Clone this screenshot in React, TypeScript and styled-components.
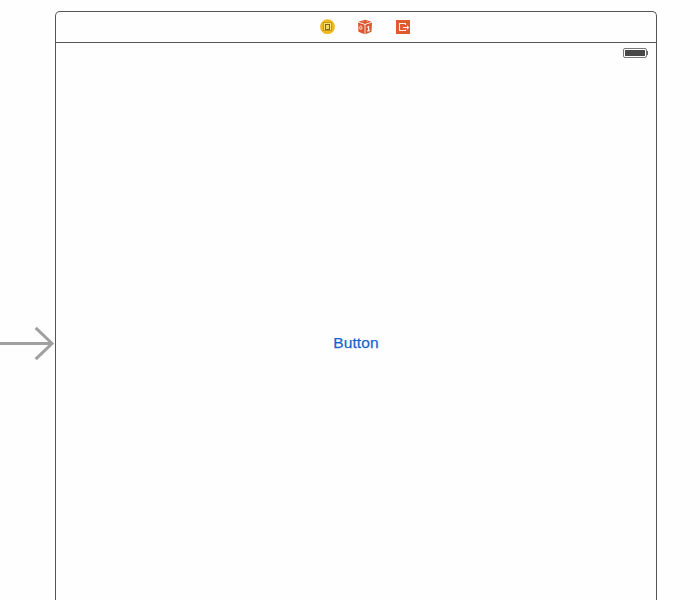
import React from "react";
import styled, { createGlobalStyle } from "styled-components";

const GlobalStyle = createGlobalStyle`
  body { margin: 0; background: #fefefe; overflow: hidden; }
`;

const Canvas = styled.main`
  display: flex;
  width: 700px;
  height: 600px;
  overflow: hidden;
  font-family: "Liberation Sans", Arial, sans-serif;
`;

const EntryGutter = styled.div`
  flex: 0 0 55px;
  padding-top: 326px;
  box-sizing: border-box;
  svg { display: block; }
`;

const Scene = styled.section`
  display: flex;
  flex-direction: column;
  box-sizing: border-box;
  flex: 0 0 602px;
  margin-top: 11px;
  border: 1px solid #565656;
  border-bottom: 0;
  border-radius: 5px 5px 0 0;
`;

const Dock = styled.header`
  display: flex;
  justify-content: center;
  gap: 22px;
  box-sizing: border-box;
  flex: 0 0 31px;
  padding: 7px 0 0 18px;
  border-bottom: 1px solid #565656;
  svg { display: block; }
`;

const StatusBar = styled.div`
  display: flex;
  justify-content: flex-end;
  padding: 4px 7px 0 0;
  flex: 0 0 16px;
`;

const View = styled.div`
  display: flex;
  justify-content: center;
  padding-top: 268px;
`;

const TextButton = styled.button`
  border: 0;
  padding: 0;
  background: none;
  color: #1764cb;
  font: 15.5px/24px "Liberation Sans", Arial, sans-serif;
  letter-spacing: 0.1px;
  -webkit-text-stroke: 0.25px #1764cb;
`;

const ControllerIcon = () => (
  <svg width="16" height="16" viewBox="-1 0 16 16" fill="none">
    <circle cx="7.5" cy="7.7" r="7.4" fill="#efb91c" />
    <rect x="3.5" y="3.5" width="8" height="8" fill="#fbe070" stroke="#c9981c" />
    <rect x="5.5" y="5.5" width="4" height="5" fill="#f8d860" stroke="#80651c" />
  </svg>
);

const ResponderIcon = () => (
  <svg width="16" height="16" viewBox="0 0 16 16" fill="none">
    <path d="M8 .8 14.6 2.7 8 4.9 1.4 2.7ZM1 3.5l6.6 2.2v9.5L1.5 12.7ZM15 3.5 8.4 5.7v9.5l6.1-2.5Z" fill="#dc562f" />
    <path d="M5 2.7h1.6m2.8 0H11" stroke="#f0a78c" strokeWidth=".8" />
    <ellipse cx="3.8" cy="8.7" rx="1.1" ry="1.8" stroke="#ffe7dd" />
    <path d="m10.3 8.4 1.3-.8v4.2m-1.4.4 2.8-.8" stroke="#fff5ef" strokeWidth="1.2" />
  </svg>
);

const ExitIcon = () => (
  <svg width="16" height="16" viewBox="0 0 16 16" fill="none">
    <path d="M1 1h14v14H1Z" fill="#e05a30" />
    <path d="M10.5 6V4.5h-6v7h6V10.5M8 8.5h5.5" stroke="#fff1e9" strokeWidth="1.1" />
    <path d="m12 6.3 2.2 2.2-2.2 2.2Z" fill="#fff1e9" />
  </svg>
);

export default function App() {
  return (
    <>
      <GlobalStyle />
      <Canvas>
        <EntryGutter>
          <svg width="55" height="36" viewBox="0 0 55 36" fill="none" stroke="#a0a0a0" strokeWidth="3">
            <path d="M0 17.5h52M35.7 1.8l16.3 15.7-16.3 15.7" />
          </svg>
        </EntryGutter>
        <Scene>
          <Dock>
            <ControllerIcon />
            <ResponderIcon />
            <ExitIcon />
          </Dock>
          <StatusBar>
            <svg width="26" height="12" viewBox="0 0 26 12" fill="none">
              <rect x=".5" y="1.5" width="23" height="9" rx="1.5" stroke="#777" />
              <rect x="2" y="3" width="20" height="6" rx=".5" fill="#484848" />
              <path d="M24.5 4v4" stroke="#666" />
            </svg>
          </StatusBar>
          <View>
            <TextButton type="button">Button</TextButton>
          </View>
        </Scene>
      </Canvas>
    </>
  );
}
